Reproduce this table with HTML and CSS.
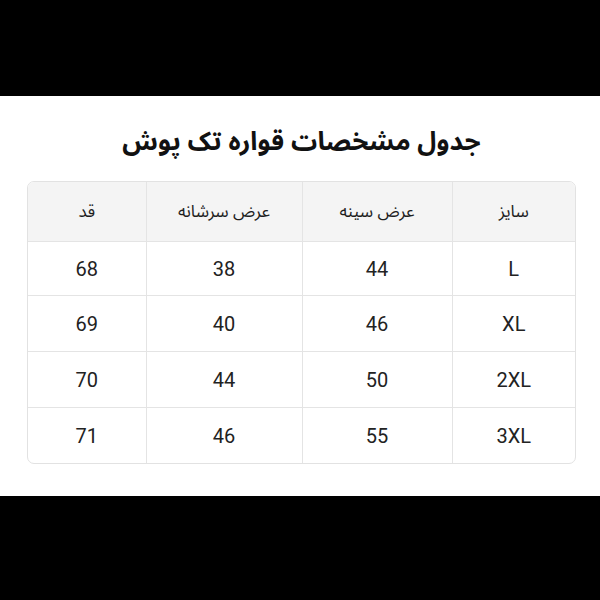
FILE: index.html
```html
<!DOCTYPE html>
<html lang="fa" dir="rtl">
<head>
<meta charset="utf-8">
<link rel="stylesheet" href="styles.css">
</head>
<body>
<div class="bar top"></div>
<main class="sheet">
  <h1 class="title">جدول مشخصات قواره تک پوش</h1>
  <div class="tablewrap">
    <table class="sizes">
      <colgroup>
        <col class="c1"><col class="c2"><col class="c3"><col class="c4">
      </colgroup>
      <thead>
        <tr><th>سایز</th><th>عرض سینه</th><th>عرض سرشانه</th><th>قد</th></tr>
      </thead>
      <tbody>
        <tr><td>L</td><td>44</td><td>38</td><td>68</td></tr>
        <tr><td>XL</td><td>46</td><td>40</td><td>69</td></tr>
        <tr><td>2XL</td><td>50</td><td>44</td><td>70</td></tr>
        <tr><td>3XL</td><td>55</td><td>46</td><td>71</td></tr>
      </tbody>
    </table>
  </div>
</main>
<div class="bar bottom"></div>
</body>
</html>
```

FILE: styles.css
```css
html, body {
  margin: 0;
  padding: 0;
  background: #000;
}
body {
  width: 600px;
  height: 600px;
  display: flex;
  flex-direction: column;
  font-family: "Noto Sans Arabic", "Vazirmatn", "DejaVu Sans", sans-serif;
  color: #1e1e1e;
}
.bar.top { height: 96px; background: #000; }
.bar.bottom { height: 104px; background: #000; }
.sheet {
  height: 400px;
  background: #fff;
  display: flex;
  flex-direction: column;
  align-items: flex-start;
}
.title {
  align-self: center;
  margin: 21px 0 0 3px;
  height: 50px;
  line-height: 50px;
  font-size: 26px;
  font-weight: 700;
  color: #111;
}
.tablewrap {
  margin: 14px 24px 0 0;
  width: 547px;
  border: 1px solid #e2e2e2;
  border-radius: 7px;
  overflow: hidden;
}
.sizes {
  width: 100%;
  border-collapse: collapse;
  table-layout: fixed;
}
.c1 { width: 123px; }
.c2 { width: 150px; }
.c3 { width: 156px; }
.c4 { width: 118px; }
.sizes th, .sizes td {
  border: 1px solid #e4e4e4;
  text-align: center;
  padding: 0;
}
.sizes tr > :first-child { border-right: none; }
.sizes tr > :last-child { border-left: none; }
.sizes thead tr th { border-top: none; }
.sizes tbody tr:last-child td { border-bottom: none; }
.sizes th {
  height: 59px;
  background: #f4f4f4;
  font-weight: 400;
  font-size: 17px;
  color: #1e1e1e;
}
.sizes td {
  height: 55px;
  font-family: Roboto, "Noto Sans", sans-serif;
  font-size: 20px;
  color: #222;
}
.sizes tbody tr:first-child td { height: 53px; }
```
